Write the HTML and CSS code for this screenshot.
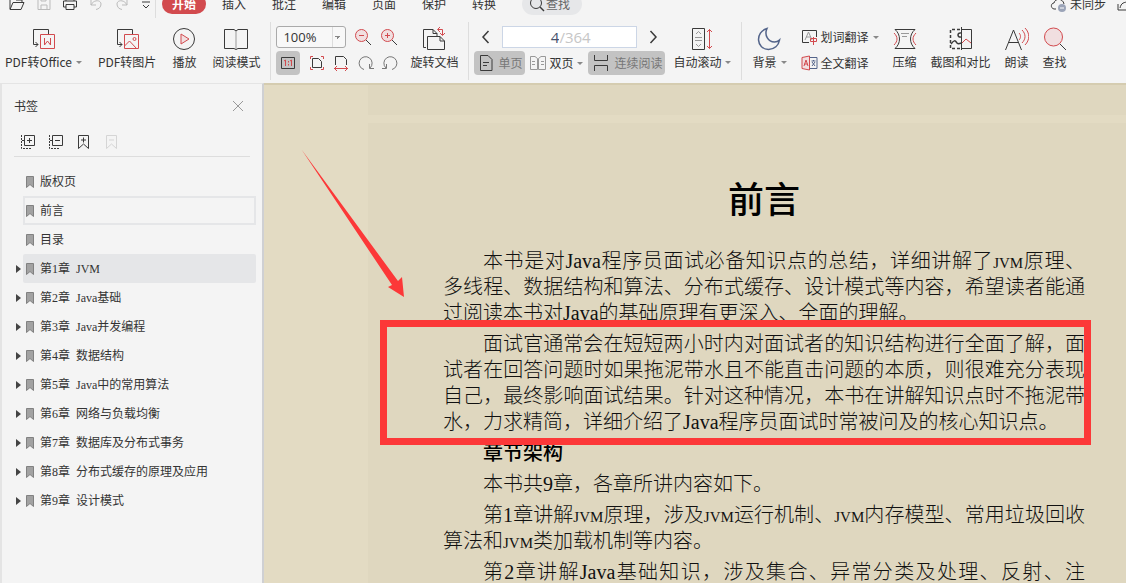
FILE: index.html
```html
<!DOCTYPE html>
<html lang="zh-CN">
<head>
<meta charset="utf-8">
<title>前言</title>
<link rel="stylesheet" href="styles.css">
</head>
<body>
<header class="toolbar">
  <div class="menu-row">
    <div class="quick">
      <button aria-label="打开"><svg width="18" height="16" viewBox="0 0 18 16"><path d="M2 13V2h5l1 2h6v3M2 13.500h11l3-7H5l-3 7"/></svg></button>
      <button aria-label="保存" class="dim"><svg width="16" height="16" viewBox="0 0 16 16"><path d="M2 2h10l2 2v9.500H2zM5 13V9h6v4M5 2v3h5V2"/></svg></button>
      <button aria-label="打印"><svg width="16" height="16" viewBox="0 0 16 16"><path d="M4 5V1h8v4M4 11H1.500V5h13v6H12M4 8.500h8v5H4z"/></svg></button>
      <button aria-label="撤销" class="dim"><svg width="16" height="16" viewBox="0 0 16 16"><path d="M3 4v5h5M3 9c3-6 10-5 10-1 0 3-2 5-5 5.500"/></svg></button>
      <button aria-label="重做" class="dim"><svg width="16" height="16" viewBox="0 0 16 16"><path d="M13 4v5H8M13 9C10 3 3 4 3 8c0 3 2 5 5 5.500"/></svg></button>
      <button aria-label="更多"><svg width="12" height="16" viewBox="0 0 12 16"><path d="M2 6h8M3 9l3 3 3-3"/></svg></button>
    </div>
    <nav class="tabs">
      <button class="active">开始</button>
      <button>插入</button>
      <button>批注</button>
      <button>编辑</button>
      <button>页面</button>
      <button>保护</button>
      <button>转换</button>
    </nav>
    <button class="search"><svg width="16" height="16" viewBox="0 0 16 16"><circle cx="7" cy="7" r="5.500"/><path d="M11 11l4 4" class="thick"/></svg>查找</button>
    <div class="sync">
      <button><svg width="18" height="16" viewBox="0 0 18 16"><path d="M6 13H4C0 12 1 7 4 7c1-5 9-5 10 1"/><circle cx="12" cy="12" r="4" class="grey-dot"/><path d="M10 12h4" class="white"/></svg>未同步</button>
      <button aria-label="分享"><svg width="16" height="16" viewBox="0 0 16 16"><path d="M2 8v6h12M4 12c1-5 4-6 9-6"/></svg></button>
    </div>
  </div>

  <div class="ribbon">
    <div class="group first">
      <button class="tool">
        <svg width="24" height="26" viewBox="0 0 24 26"><path d="M17.500 8V3.500h-15V18.500H7M4.500 16L7 18.500 4.500 21"/><path d="M9.500 8.500h14v14h-14zM13.500 12v7l3-4 3 4v-7" class="red paper"/></svg>
        <span class="label">PDF转Office<i class="caret"></i></span>
      </button>
      <button class="tool">
        <svg width="24" height="26" viewBox="0 0 24 26"><path d="M17.500 8V3.500h-15V18.500H7M4.500 16L7 18.500 4.500 21"/><path d="M9.500 8.500h14v14h-14z" class="red paper"/><path d="M9.500 20l5-5 7 7.500" class="red"/><circle cx="19.500" cy="13" r="1.500" class="red"/></svg>
        <span class="label">PDF转图片</span>
      </button>
      <button class="tool">
        <svg width="24" height="26" viewBox="0 0 24 26"><circle cx="12" cy="13" r="10.500"/><path d="M9 8l8 5-8 5z" class="red tint"/></svg>
        <span class="label">播放</span>
      </button>
      <button class="tool">
        <svg width="24" height="26" viewBox="0 0 24 26"><path d="M12 5l-2-1.500H.5v19H10l2 1 2-1h9.500v-19H14z"/><path d="M12 5v18" class="grey"/></svg>
        <span class="label">阅读模式</span>
      </button>
    </div>

    <div class="group view">
      <div class="stack zoom">
        <div class="line">
          <select aria-label="缩放"><option>100%</option></select>
          <button aria-label="缩小"><svg width="18" height="18" viewBox="0 0 18 18"><circle cx="7.500" cy="7.500" r="6" class="red tint"/><path d="M5 7.500h5" class="red"/><path d="M12 12l5 5"/></svg></button>
          <button aria-label="放大"><svg width="18" height="18" viewBox="0 0 18 18"><circle cx="7.500" cy="7.500" r="6" class="red tint"/><path d="M5 7.500h5M7.500 5v5" class="red"/><path d="M12 12l5 5"/></svg></button>
        </div>
        <div class="line fit">
          <button class="on" aria-label="实际大小"><svg width="16" height="16" viewBox="0 0 16 16"><path d="M1.500 2.500h13v11h-13z"/><path d="M4 6l1.500-1v6M10 6l1.500-1v6M8.500 6v1.500M8.500 9v1.500" class="red"/></svg></button>
          <button aria-label="适合页面"><svg width="16" height="16" viewBox="0 0 16 16"><path d="M3.500 3.500h6l3 3v6h-9z"/><path d="M1.500 4V1.500H4M12 1.500h2.500V4M1.500 12v2.500H4M12 14.500h2.500V12" class="red"/></svg></button>
          <button aria-label="适合宽度"><svg width="16" height="16" viewBox="0 0 16 16"><path d="M2.500 10V1.500h8l3 3V10"/><path d="M1 13.500h14M4 11l-2.500 2.500L4 16M12 11l2.500 2.500L12 16" class="red"/></svg></button>
          <button aria-label="顺时针旋转" class="soft"><svg width="16" height="16" viewBox="0 0 16 16"><path d="M6 14.500A6.500 6.500 0 1 1 12 13M11.500 9v4.500H16"/></svg></button>
          <button aria-label="逆时针旋转" class="soft"><svg width="16" height="16" viewBox="0 0 16 16"><path d="M10 14.500A6.500 6.500 0 1 0 4 13M4.500 9v4.500H0"/></svg></button>
        </div>
      </div>
      <button class="tool">
        <svg width="26" height="26" viewBox="0 0 26 26"><path d="M5 21.500H2.500v-18H12l4 4v3M6.500 10.500H19l4.500 4.500v8.500h-17zM19 10.500V15h4.500M12 3.500v4h4"/><path d="M17 3.500h4.500V9M19 1l-2.500 2.500L19 6M19 7l2.500 2.500L24 7" class="red"/></svg>
        <span class="label">旋转文档</span>
      </button>
    </div>

    <div class="group pages">
      <div class="stack">
        <div class="line pager">
          <button aria-label="上一页"><svg width="14" height="14" viewBox="0 0 14 14"><path d="M9.500 1L4 7l5.500 6" class="thick"/></svg></button>
          <label class="page-box"><input value="4" aria-label="页码"><span>/364</span></label>
          <button aria-label="下一页"><svg width="14" height="14" viewBox="0 0 14 14"><path d="M4.500 1L10 7l-5.500 6" class="thick"/></svg></button>
        </div>
        <div class="line modes">
          <button class="on"><svg width="14" height="16" viewBox="0 0 14 16"><path d="M1.500 .5H9l4 4v11H1.500zM4 7.500h6M4 10.500h4"/></svg>单页</button>
          <button class="plain"><svg width="16" height="16" viewBox="0 0 16 16" class="grey"><path d="M.5 1.500H5l2.500 2v11h-7zM15.500 1.500H11l-2.500 2v11h7zM2 6.500h3M2 9.500h3M11 6.500h3M11 9.500h3"/></svg>双页<i class="caret"></i></button>
          <button class="on"><svg width="16" height="16" viewBox="0 0 16 16"><path d="M1.500 0v5.500h13V0M1.500 16v-5.500h13V16"/></svg>连续阅读</button>
        </div>
      </div>
      <button class="tool">
        <svg width="24" height="26" viewBox="0 0 24 26"><path d="M2.500 2.500h12v21h-12z"/><path d="M6 8l2.500-2.500L11 8M6 18l2.500 2.500L11 18M5 11.500h7M5 14.500h7" class="grey"/><path d="M19.500 3.500v19M17 6l2.500-2.500L22 6M17 20l2.500 2.500L22 20" class="red"/></svg>
        <span class="label">自动滚动<i class="caret"></i></span>
      </button>
    </div>

    <div class="group extra">
      <button class="tool">
        <svg width="24" height="26" viewBox="0 0 24 26"><path d="M10 2.500C-2 6-1 23 11.500 23.500c6 0 10-4 11-9.500-1 1-3 2-5 2C11 16 7 9 10 2.500z" class="blue thick"/></svg>
        <span class="label">背景<i class="caret"></i></span>
      </button>
      <div class="stack translate">
        <button><svg width="17" height="16" viewBox="0 0 17 16"><path d="M8 13.500H1.500v-12h14V8"/><path d="M4 11l3.500-8L11 11M5 8h5" class="grey"/><path d="M9.500 9.500h6v3h-6zM12.500 8v8" class="red"/></svg>划词翻译<i class="caret"></i></button>
        <button><svg width="17" height="16" viewBox="0 0 17 16"><path d="M9 2.500h7v11H9" class="blue"/><path d="M10.500 6h4M12.500 5v1M11 7l3 4M14 7l-3 4" class="blue"/><path d="M1 2.500L8.500 1v14L1 13.500z" class="red tint"/><path d="M3 11l2-6 2 6M3.500 9h3" class="red"/></svg>全文翻译</button>
      </div>
      <button class="tool">
        <svg width="24" height="26" viewBox="0 0 24 26"><path d="M2 3.500h20c-6 5-6 14 0 19H2c6-5 6-14 0-19z"/><path d="M8 7.500h8M9 10.500h5" class="grey"/><path d="M1 7c4 4 4 8 0 12M23 7c-4 4-4 8 0 12" class="red"/></svg>
        <span class="label">压缩</span>
      </button>
      <button class="tool">
        <svg width="24" height="26" viewBox="0 0 24 26"><path d="M11 3.500H1.500v19H11" class="thick dashed"/><path d="M12.500 3.500h10v19h-10M12.500 1v23"/><path d="M2 18c3-4 4-4 6-1 1 1 2 1 4 0" class="thick"/><path d="M12 7c-4-1-4 5 0 4" class="thick"/><path d="M13 17l4-4 5 4" class="red"/></svg>
        <span class="label">截图和对比</span>
      </button>
      <button class="tool">
        <svg width="24" height="26" viewBox="0 0 24 26"><path d="M.5 24L8.500 4l8 20M4 16.500h9.500"/><path d="M14 7c2 2 2 5 0 7M17 4c4 4 4 9 0 13M20 2c5 5 5 12 0 17" class="red"/></svg>
        <span class="label">朗读</span>
      </button>
      <button class="tool">
        <svg width="24" height="26" viewBox="0 0 24 26"><circle cx="10.500" cy="11" r="9" class="red tint"/><path d="M17 18l6 6"/></svg>
        <span class="label">查找</span>
      </button>
    </div>
  </div>
</header>

<main class="workspace">
  <aside class="sidebar">
    <div class="side-head">
      <h2>书签</h2>
      <button aria-label="关闭"><svg width="12" height="12" viewBox="0 0 12 12" class="grey"><path d="M1 1l10 10M11 1L1 11"/></svg></button>
    </div>
    <div class="side-tools">
      <button aria-label="全部展开"><svg width="16" height="16" viewBox="0 0 16 16"><path d="M4.500 1.500h10v10h-10zM9.500 4v5M7 6.500h5"/><path d="M1.500 1v13.500H12M2 6.500h2" class="dots"/></svg></button>
      <button aria-label="全部折叠"><svg width="16" height="16" viewBox="0 0 16 16"><path d="M4.500 1.500h10v10h-10zM7 6.500h5"/><path d="M1.500 1v13.500H12M2 6.500h2" class="dots"/></svg></button>
      <button aria-label="添加书签"><svg width="16" height="16" viewBox="0 0 16 16"><path d="M2.500 1.500h10v13l-5-4.500-5 4.500zM7.500 3.500v5M5 6h5"/></svg></button>
      <button aria-label="删除书签" class="off"><svg width="16" height="16" viewBox="0 0 16 16"><path d="M2.500 1.500h10v13l-5-4.500-5 4.500zM5 6h5"/></svg></button>
    </div>
    <ul class="outline">
      <li><a href="#"><svg class="mark" width="8" height="12" viewBox="0 0 8 12"><path d="M.5.500h7v11L4 8.500.500 11.500z"/></svg>版权页</a></li>
      <li class="current"><a href="#"><svg class="mark" width="8" height="12" viewBox="0 0 8 12"><path d="M.5.500h7v11L4 8.500.500 11.500z"/></svg>前言</a></li>
      <li><a href="#"><svg class="mark" width="8" height="12" viewBox="0 0 8 12"><path d="M.5.500h7v11L4 8.500.500 11.500z"/></svg>目录</a></li>
      <li class="parent hover"><a href="#"><svg class="mark" width="8" height="12" viewBox="0 0 8 12"><path d="M.5.500h7v11L4 8.500.500 11.500z"/></svg>第1章 <span>JVM</span></a></li>
      <li class="parent"><a href="#"><svg class="mark" width="8" height="12" viewBox="0 0 8 12"><path d="M.5.500h7v11L4 8.500.500 11.500z"/></svg>第2章 <span>Java基础</span></a></li>
      <li class="parent"><a href="#"><svg class="mark" width="8" height="12" viewBox="0 0 8 12"><path d="M.5.500h7v11L4 8.500.500 11.500z"/></svg>第3章 <span>Java并发编程</span></a></li>
      <li class="parent"><a href="#"><svg class="mark" width="8" height="12" viewBox="0 0 8 12"><path d="M.5.500h7v11L4 8.500.500 11.500z"/></svg>第4章 <span>数据结构</span></a></li>
      <li class="parent"><a href="#"><svg class="mark" width="8" height="12" viewBox="0 0 8 12"><path d="M.5.500h7v11L4 8.500.500 11.500z"/></svg>第5章 <span>Java中的常用算法</span></a></li>
      <li class="parent"><a href="#"><svg class="mark" width="8" height="12" viewBox="0 0 8 12"><path d="M.5.500h7v11L4 8.500.500 11.500z"/></svg>第6章 <span>网络与负载均衡</span></a></li>
      <li class="parent"><a href="#"><svg class="mark" width="8" height="12" viewBox="0 0 8 12"><path d="M.5.500h7v11L4 8.500.500 11.500z"/></svg>第7章 <span>数据库及分布式事务</span></a></li>
      <li class="parent"><a href="#"><svg class="mark" width="8" height="12" viewBox="0 0 8 12"><path d="M.5.500h7v11L4 8.500.500 11.500z"/></svg>第8章 <span>分布式缓存的原理及应用</span></a></li>
      <li class="parent"><a href="#"><svg class="mark" width="8" height="12" viewBox="0 0 8 12"><path d="M.5.500h7v11L4 8.500.500 11.500z"/></svg>第9章 <span>设计模式</span></a></li>
    </ul>
  </aside>

  <section class="viewer">
    <div class="sheet previous"></div>
    <article class="sheet">
      <h1>前言</h1>
      <p>本书是对Java程序员面试必备知识点的总结，详细讲解了<span class="term">JVM</span>原理、多线程、数据结构和算法、分布式缓存、设计模式等内容，希望读者能通过阅读本书对Java的基础原理有更深入、全面的理解。</p>
      <p>面试官通常会在短短两小时内对面试者的知识结构进行全面了解，面试者在回答问题时如果拖泥带水且不能直击问题的本质，则很难充分表现自己，最终影响面试结果。针对这种情况，本书在讲解知识点时不拖泥带水，力求精简，详细介绍了Java程序员面试时常被问及的核心知识点。</p>
      <h3>章节架构</h3>
      <p>本书共9章，各章所讲内容如下。</p>
      <p>第1章讲解<span class="term">JVM</span>原理，涉及<span class="term">JVM</span>运行机制、<span class="term">JVM</span>内存模型、常用垃圾回收算法和<span class="term">JVM</span>类加载机制等内容。</p>
      <p class="cut">第2章讲解Java基础知识，涉及集合、异常分类及处理、反射、注</p>
    </article>
    <div class="frame"></div>
    <svg class="arrow" width="104" height="150" viewBox="0 0 104 150"><path d="M.500.500L97 132l4-4 2 20-16-10 4-2z"/></svg>
  </section>
</main>
</body>
</html>
```
FILE: styles.css
```css
* { box-sizing: border-box; }

body {
  margin: 0;
  height: 100vh;
  display: flex;
  flex-direction: column;
  overflow: hidden;
  background: #f4f4f4;
  color: #333;
  font: 12px/20px "Noto Sans CJK SC", sans-serif;
}

button {
  display: flex;
  align-items: center;
  padding: 0;
  border: 0;
  background: none;
  color: inherit;
  font: inherit;
  white-space: nowrap;
}

svg { flex: none; fill: none; stroke: #3a3a3a; }
svg .red { stroke: #d24a4e; }
svg .tint { fill: #f1dfe0; }
svg .paper { fill: #f4f4f4; }
svg .blue { stroke: #53648a; }
svg.grey, svg .grey { stroke: #999; }
svg .thick { stroke-width: 1.5; }
svg .dashed { stroke-dasharray: 3 2; }
svg .dots { stroke-dasharray: 2 1; }
svg .grey-dot { fill: #9ba4b8; stroke: none; }
svg .white { stroke: #fff; }

.caret {
  margin-left: 4px;
  border: 3px solid transparent;
  border-top-color: #888;
  border-bottom: 0;
}

/* Toolbar */
.toolbar { flex: none; height: 83px; overflow: hidden; }

.menu-row {
  display: flex;
  align-items: center;
  height: 28px;
  margin-top: -10px;
}
.quick {
  display: flex;
  align-items: center;
  gap: 10px;
  width: 156px;
  height: 28px;
  padding-left: 8px;
  border-right: 1px solid #ddd;
}
.quick .dim svg { stroke: #bbb; }
.tabs { display: flex; padding-left: 6px; }
.tabs button { width: 50px; height: 20px; justify-content: center; }
.tabs .active {
  width: 44px;
  margin-right: 3px;
  border-radius: 10px;
  background: #d24a4e;
  color: #fff;
  font-weight: bold;
}
.search {
  gap: 1px;
  width: 60px;
  height: 22px;
  margin-left: 13px;
  padding-left: 7px;
  border-radius: 11px;
  background: #e6e7e9;
  color: #666;
}
.sync { display: flex; flex: none; gap: 10px; margin-left: auto; margin-right: -6px; }
.sync button { gap: 2px; }

.ribbon { display: flex; padding-top: 4px; }
.group {
  display: flex;
  flex: none;
  height: 58px;
  padding: 4px 10px 0 5px;
  border-right: 1px solid #ddd;
}
.first { gap: 16px; }
.view { gap: 12px; }
.pages { gap: 8px; }
.extra { gap: 14px; padding-left: 10px; border: 0; }

.tool { flex-direction: column; height: 46px; }
.label { display: flex; align-items: center; }

.stack { display: flex; flex-direction: column; gap: 2px; margin-top: -1px; }
.line { display: flex; align-items: center; height: 24px; }
.zoom { width: 122px; }
.zoom .line { justify-content: space-between; }
.zoom select {
  appearance: none;
  width: 70px;
  height: 22px;
  padding: 0 6px;
  border: 1px solid #aaa;
  border-radius: 3px;
  background:
    linear-gradient(45deg, transparent 50%, #888 50%) 58px 9px / 3px 3px no-repeat,
    linear-gradient(-45deg, transparent 50%, #888 50%) 61px 9px / 3px 3px no-repeat,
    linear-gradient(#ddd, #ddd) 55px 0 / 1px 22px no-repeat,
    #f8f8f8;
  color: #333;
  font: 13px "Open Sans", sans-serif;
}
.soft svg { stroke: #777; }
.on {
  height: 24px;
  border-radius: 4px;
  background: #c3c3c3;
  color: #777;
}
.fit .on { width: 24px; justify-content: center; }

.pager { justify-content: space-between; padding: 0 5px; }
.page-box {
  display: flex;
  align-items: center;
  width: 135px;
  height: 22px;
  border: 1px solid #ccd6e6;
  background: #fff;
  color: #c6c6c6;
  font: 15px "Open Sans", sans-serif;
}
.page-box input {
  width: 56px;
  padding: 0;
  border: 0;
  outline: 0;
  background: none;
  color: #46536e;
  font: inherit;
  text-align: right;
}
.modes { gap: 5px; }
.modes button { gap: 5px; }
.modes .plain { gap: 3px; }
.modes .plain .caret { margin-left: 1px; }
.modes .on { padding: 0 3px 0 5px; }

.translate { gap: 2px; }
.translate button { gap: 3px; height: 24px; }
.translate .caret { margin-left: 1px; }

/* Workspace */
.workspace { display: flex; flex: 1; min-height: 0; }

.sidebar {
  flex: none;
  width: 264px;
  padding: 12px 6px 0 12px;
  border: solid #e4e4e4;
  border-width: 1px 2px 0;
  border-right-color: #cfd0d3;
  background: #f4f4f4;
}
.side-head {
  display: flex;
  align-items: center;
  justify-content: space-between;
  height: 20px;
  padding-right: 12px;
}
.side-head h2 { margin: 0; font-size: 12px; font-weight: normal; }
.side-tools {
  display: flex;
  gap: 12px;
  margin-right: 6px;
  padding: 18px 0 6px 6px;
  border-bottom: 1px solid #ddd;
}
.side-tools .off svg { stroke: #d5d5d5; }

.outline { margin: 10px 0 0; padding: 0 0 0 9px; list-style: none; }
.outline li { position: relative; height: 29px; }
.outline a {
  display: flex;
  align-items: center;
  gap: 6px;
  height: 29px;
  padding-left: 3px;
  color: #333;
  font-family: "Liberation Serif", "Noto Sans CJK SC", sans-serif;
  text-decoration: none;
}
.outline .current a { padding-left: 1px; border: 2px solid #e5e6e8; }
.outline .hover a { background: #e5e6e8; border-radius: 2px; }
.outline .parent::before {
  content: "";
  position: absolute;
  left: -7px;
  top: 11px;
  border: 4px solid transparent;
  border-left: 5px solid #444;
  border-right: 0;
}
.mark { fill: #a2a2a2; stroke: #818181; }

.viewer {
  position: relative;
  flex: 1;
  min-width: 0;
  padding-left: 104px;
  overflow: hidden;
  border-top: 2px solid #d5ccb0;
  background: #e3dbc3;
}
.sheet {
  width: 792px;
  min-height: 100%;
  padding: 47px 75px 0;
  background: #dfd7bf;
  color: #111;
  font: 300 20px/26px "Liberation Serif", "Noto Sans CJK SC", serif;
}
.sheet.previous { height: 30px; min-height: 0; margin-bottom: 8px; padding: 0; }
.sheet h1 {
  margin: 0 0 16px;
  color: #000;
  font-size: 36px;
  font-weight: 500;
  line-height: 62px;
  text-align: center;
}
.sheet p, .sheet h3 { margin: 0 0 5px; text-indent: 40px; text-align: justify; }
.sheet .term { font-size: 15px; line-height: 15px; }
.sheet h3 { color: #000; font-size: 20px; font-weight: 500; }
.sheet .cut { text-align-last: justify; }

.frame {
  position: absolute;
  left: 116px;
  top: 235px;
  width: 711px;
  height: 125px;
  border: 7px solid #fc3838;
}
.arrow { position: absolute; left: 37px; top: 64px; fill: #fc3838; stroke: none; }
```
